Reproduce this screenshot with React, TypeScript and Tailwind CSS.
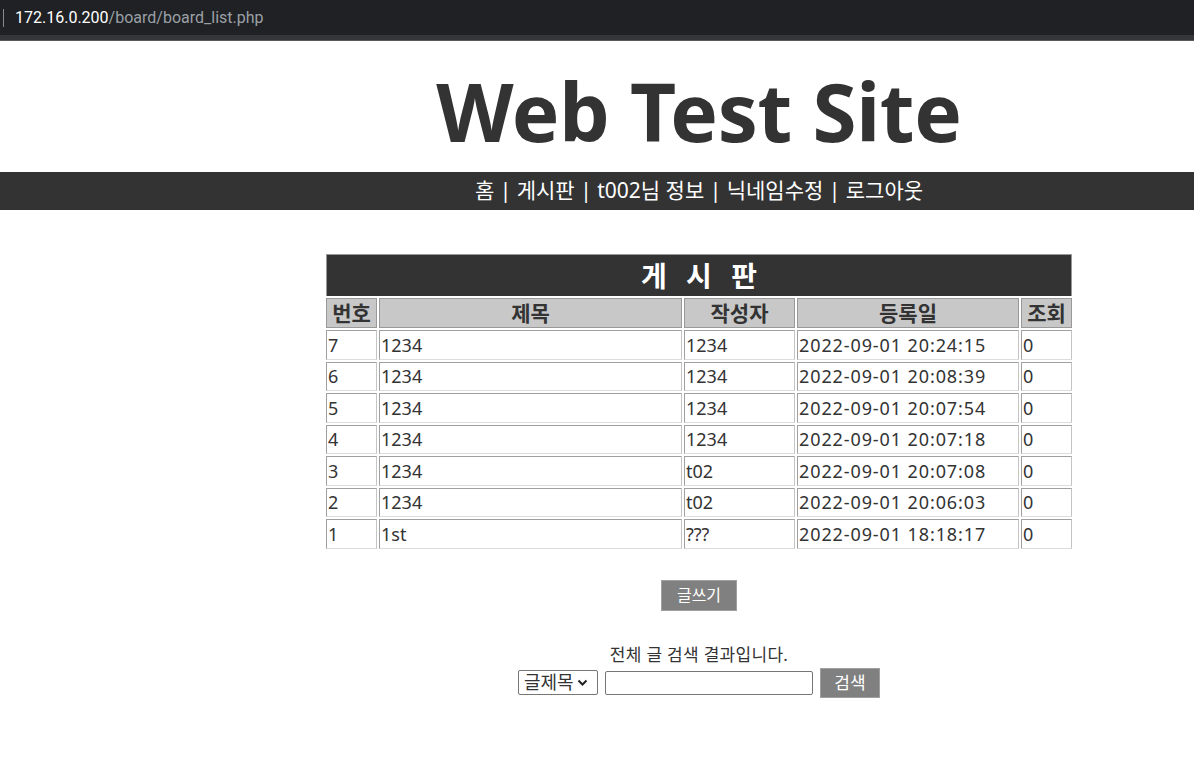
import React from 'react';

const rows = [
  { no: 7, title: '1234', writer: '1234', date: '2022-09-01 20:24:15', hit: 0 },
  { no: 6, title: '1234', writer: '1234', date: '2022-09-01 20:08:39', hit: 0 },
  { no: 5, title: '1234', writer: '1234', date: '2022-09-01 20:07:54', hit: 0 },
  { no: 4, title: '1234', writer: '1234', date: '2022-09-01 20:07:18', hit: 0 },
  { no: 3, title: '1234', writer: 't02', date: '2022-09-01 20:07:08', hit: 0 },
  { no: 2, title: '1234', writer: 't02', date: '2022-09-01 20:06:03', hit: 0 },
  { no: 1, title: '1st', writer: '???', date: '2022-09-01 18:18:17', hit: 0 },
];

const kr = { fontFamily: '"Noto Sans", "Noto Sans CJK KR", sans-serif' };

export default function App() {
  return (
    <div className="w-[1194px] min-h-[770px] bg-white text-[#333]" style={kr}>
      {/* browser address bar */}
      <div className="h-[35px] bg-[#202124] flex items-center pl-[3px]">
        <span className="w-px h-[18px] bg-[#8a8a8a]" />
        <span className="ml-[11px] text-[16px] text-white font-['Roboto',sans-serif]">172.16.0.200</span>
        <span className="text-[16px] text-[#9aa0a6] font-['Roboto',sans-serif]">/board/board_list.php</span>
      </div>
      <div className="h-[5px] bg-[#35363a]" />
      <div className="h-px bg-[#5a5a5a]" />

      {/* header */}
      <div className="pl-[204px] flex justify-center pt-[22px] h-[131px]">
        <h1 className="text-[80px] font-bold leading-[96px] tracking-[-0.3px]">Web Test Site</h1>
      </div>
      <nav className="h-[38px] bg-[#333] text-white text-[21px] pl-[204px] flex items-center justify-center">
        <span>홈 | 게시판 | t002님 정보 | 닉네임수정 | 로그아웃</span>
      </nav>

      {/* board */}
      <div className="pl-[204px] flex flex-col items-center pt-[44px]">
        <div className="w-[746px]">
          <div className="h-[42px] bg-[#333] border border-[#999] border-b-0 flex items-center justify-center">
            <span className="text-white text-[28px] font-bold tracking-[6px] pl-[6px]">게 시 판</span>
          </div>
          <table className="w-[750px] -mx-[2px] border-separate border-spacing-[2px] table-fixed">
            <colgroup>
              <col className="w-[51px]" />
              <col className="w-[303px]" />
              <col className="w-[111px]" />
              <col className="w-[222px]" />
              <col className="w-[51px]" />
            </colgroup>
            <thead>
              <tr>
                {['번호', '제목', '작성자', '등록일', '조회'].map((h) => (
                  <th key={h} className="h-[30px] bg-[#c8c8c8] border border-[#999] text-[21px] font-bold leading-[26px] p-0 whitespace-nowrap">
                    {h}
                  </th>
                ))}
              </tr>
            </thead>
            <tbody>
              {rows.map((r) => (
                <tr key={r.no} className="text-[18px]">
                  {[r.no, r.title, r.writer, r.date, r.hit].map((c, i) => (
                    <td
                      key={i}
                      className={`h-[29.5px] border border-[#a0a0a0] border-b-[#dcdcdc] border-r-[#c4c4c4] px-px py-0 leading-[26px] whitespace-nowrap ${
                        i === 3 ? 'tracking-[0.9px]' : ''
                      }`}
                    >
                      {c}
                    </td>
                  ))}
                </tr>
              ))}
            </tbody>
          </table>
        </div>

        <button className="mt-[29px] h-[31px] w-[76px] bg-[#808080] border border-[#a0a0a0] text-white text-[16px]">
          글쓰기
        </button>

        <p className="mt-[33px] text-[17px] leading-[22px] tracking-[0.3px]">전체 글 검색 결과입니다.</p>
        <div className="flex items-center mt-[2px] gap-[7px]">
          <div className="h-[25px] w-[80px] border border-[#767676] rounded-[2px] flex items-center pl-[5px] gap-[3px] text-[18px]">
            <span>글제목</span>
            <svg width="11" height="8" viewBox="0 0 11 8" fill="none">
              <path d="M1.5 1.5 L5.5 5.5 L9.5 1.5" stroke="#222" strokeWidth="2" />
            </svg>
          </div>
          <div className="h-[24px] w-[208px] border border-[#767676] rounded-[2px]" />
          <button className="h-[30px] w-[60px] bg-[#808080] border border-[#a0a0a0] text-white text-[17px]">
            검색
          </button>
        </div>
      </div>
    </div>
  );
}
